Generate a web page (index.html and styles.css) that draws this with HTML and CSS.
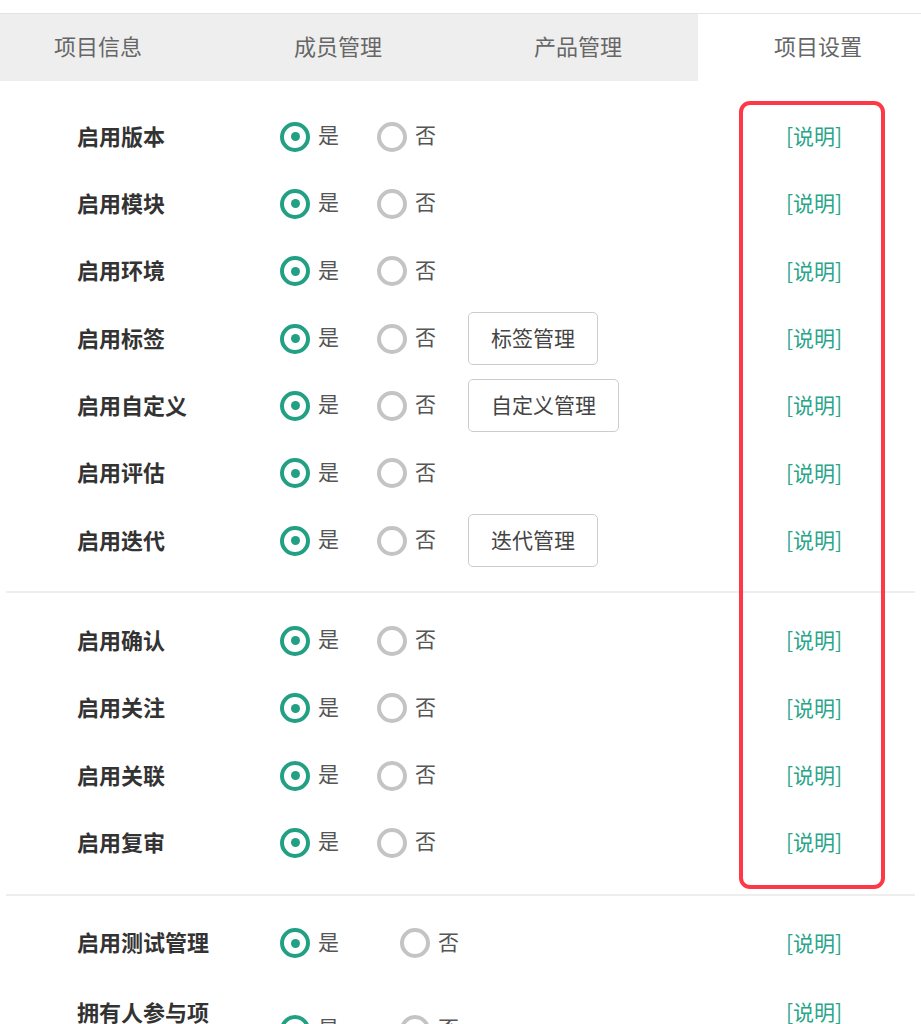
FILE: index.html
```html
<!DOCTYPE html>
<html lang="zh-CN">
<head>
<meta charset="utf-8">
<title>项目设置</title>
<link rel="stylesheet" href="styles.css">
</head>
<body>
<div class="page">
  <div class="tabs-wrap">
    <div class="tabs">
      <div class="tab">项目信息</div>
      <div class="tab">成员管理</div>
      <div class="tab">产品管理</div>
      <div class="tab active">项目设置</div>
    </div>
  </div>

  <div class="section first">
    <div class="row"><div class="label">启用版本</div><div class="opt"><span class="radio on"></span><span class="txt">是</span></div><div class="opt"><span class="radio"></span><span class="txt">否</span></div><div class="extra"></div><div class="note">[说明]</div></div>
    <div class="row"><div class="label">启用模块</div><div class="opt"><span class="radio on"></span><span class="txt">是</span></div><div class="opt"><span class="radio"></span><span class="txt">否</span></div><div class="extra"></div><div class="note">[说明]</div></div>
    <div class="row"><div class="label">启用环境</div><div class="opt"><span class="radio on"></span><span class="txt">是</span></div><div class="opt"><span class="radio"></span><span class="txt">否</span></div><div class="extra"></div><div class="note">[说明]</div></div>
    <div class="row"><div class="label">启用标签</div><div class="opt"><span class="radio on"></span><span class="txt">是</span></div><div class="opt"><span class="radio"></span><span class="txt">否</span></div><div class="extra"><span class="btn">标签管理</span></div><div class="note">[说明]</div></div>
    <div class="row"><div class="label">启用自定义</div><div class="opt"><span class="radio on"></span><span class="txt">是</span></div><div class="opt"><span class="radio"></span><span class="txt">否</span></div><div class="extra"><span class="btn">自定义管理</span></div><div class="note">[说明]</div></div>
    <div class="row"><div class="label">启用评估</div><div class="opt"><span class="radio on"></span><span class="txt">是</span></div><div class="opt"><span class="radio"></span><span class="txt">否</span></div><div class="extra"></div><div class="note">[说明]</div></div>
    <div class="row"><div class="label">启用迭代</div><div class="opt"><span class="radio on"></span><span class="txt">是</span></div><div class="opt"><span class="radio"></span><span class="txt">否</span></div><div class="extra"><span class="btn">迭代管理</span></div><div class="note">[说明]</div></div>
  </div>

  <div class="section">
    <div class="row"><div class="label">启用确认</div><div class="opt"><span class="radio on"></span><span class="txt">是</span></div><div class="opt"><span class="radio"></span><span class="txt">否</span></div><div class="extra"></div><div class="note">[说明]</div></div>
    <div class="row"><div class="label">启用关注</div><div class="opt"><span class="radio on"></span><span class="txt">是</span></div><div class="opt"><span class="radio"></span><span class="txt">否</span></div><div class="extra"></div><div class="note">[说明]</div></div>
    <div class="row"><div class="label">启用关联</div><div class="opt"><span class="radio on"></span><span class="txt">是</span></div><div class="opt"><span class="radio"></span><span class="txt">否</span></div><div class="extra"></div><div class="note">[说明]</div></div>
    <div class="row"><div class="label">启用复审</div><div class="opt"><span class="radio on"></span><span class="txt">是</span></div><div class="opt"><span class="radio"></span><span class="txt">否</span></div><div class="extra"></div><div class="note">[说明]</div></div>
  </div>

  <div class="section last">
    <div class="row wide"><div class="label">启用测试管理</div><div class="opt"><span class="radio on"></span><span class="txt">是</span></div><div class="opt"><span class="radio"></span><span class="txt">否</span></div><div class="extra"></div><div class="note">[说明]</div></div>
    <div class="row wide tall"><div class="label">拥有人参与项目管理</div><div class="opt"><span class="radio on"></span><span class="txt">是</span></div><div class="opt"><span class="radio"></span><span class="txt">否</span></div><div class="extra"></div><div class="note">[说明]</div></div>
  </div>

  <div class="highlight"></div>
</div>
</body>
</html>
```

FILE: styles.css
```css
html, body {
  margin: 0;
  padding: 0;
  background: #ffffff;
}

body {
  font-family: "Noto Sans CJK SC", "Noto Sans", sans-serif;
  overflow: hidden;
  height: 1024px;
}

.page {
  position: relative;
  padding-top: 13px;
}

.tabs-wrap {
  border-top: 1px solid #e4e4e4;
  background: #eeeeee;
  overflow: hidden;
}

.tabs {
  display: flex;
  margin-left: -22px;
  width: 960px;
}

.tab {
  box-sizing: border-box;
  width: 240px;
  height: 67px;
  padding-bottom: 6px;
  display: flex;
  align-items: center;
  justify-content: center;
  font-size: 22px;
  color: #666666;
}

.tab.active {
  background: #ffffff;
}

.section {
  margin: 0 6px;
  padding: 14px 0 17px;
  border-bottom: 2px solid #eeeeee;
}

.section.first {
  padding-top: 22px;
}

.section.last {
  border-bottom: none;
}

.row {
  display: grid;
  grid-template-columns: 203px 97px 91px 1fr 120px;
  align-items: center;
  height: 67.33px;
  padding: 0 41px 0 71px;
}

.row.wide {
  grid-template-columns: 203px 120px 91px 1fr 120px;
}

.row.tall {
  height: auto;
  padding-top: 17px;
}

.label {
  font-size: 22px;
  font-weight: bold;
  color: #333333;
  max-width: 140px;
  line-height: 34px;
  padding-bottom: 4px;
}

.opt {
  display: flex;
  align-items: center;
  gap: 8px;
  font-size: 21px;
  color: #555555;
}

.txt {
  padding-bottom: 5px;
}

.radio {
  box-sizing: border-box;
  width: 30px;
  height: 30px;
  border-radius: 50%;
  border: 4px solid #c4c4c4;
  display: flex;
  align-items: center;
  justify-content: center;
  flex: none;
}

.radio.on {
  border: 4.5px solid #22a083;
}

.radio.on::after {
  content: "";
  width: 9px;
  height: 9px;
  border-radius: 50%;
  background: #22a083;
}

.extra {
  display: flex;
  align-items: center;
}

.btn {
  display: inline-block;
  box-sizing: border-box;
  height: 53px;
  line-height: 49px;
  padding: 0 22px;
  border: 1px solid #cccccc;
  border-radius: 5px;
  font-size: 21px;
  color: #444444;
}

.note {
  text-align: center;
  font-size: 21px;
  color: #2aa58a;
  line-height: 34px;
  padding-bottom: 3px;
}

.row.tall .note {
  align-self: start;
}

.highlight {
  position: absolute;
  left: 739px;
  top: 101px;
  width: 146px;
  height: 788px;
  box-sizing: border-box;
  border: 4px solid #ff3848;
  border-radius: 11px;
  pointer-events: none;
}
```
